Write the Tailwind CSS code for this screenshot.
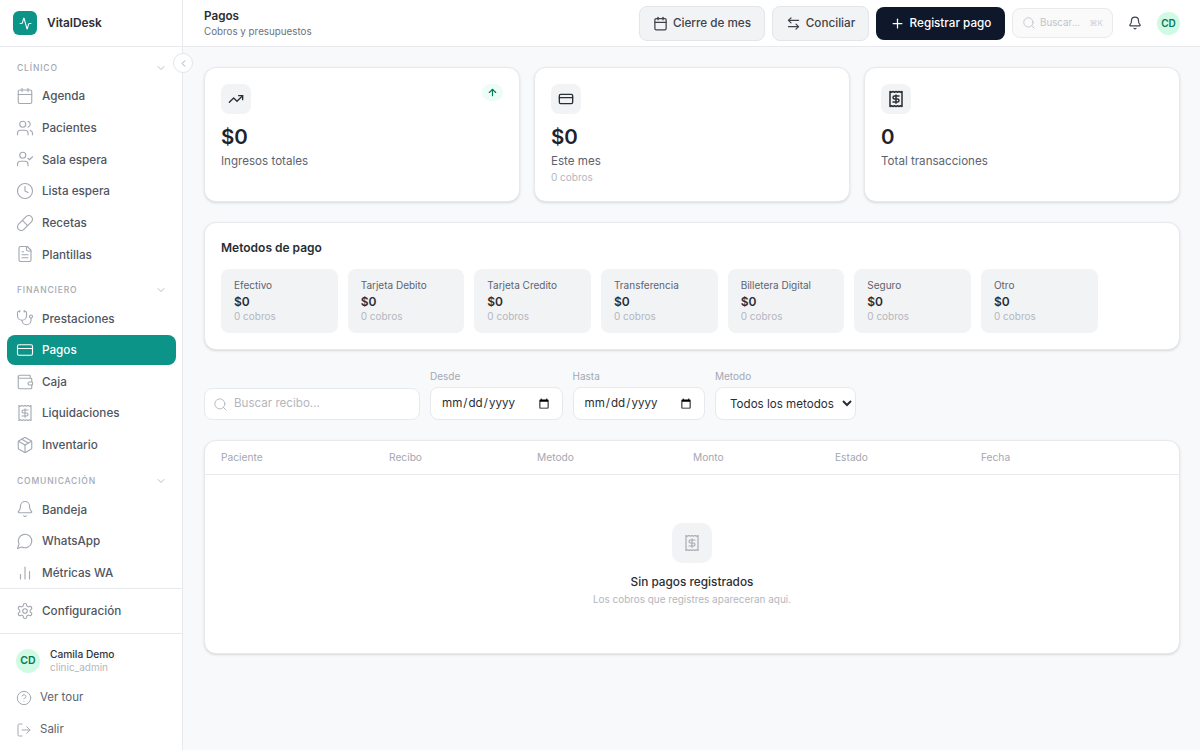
<!DOCTYPE html>
<html lang="es">
<head>
  <meta charset="UTF-8">
  <title>VitalDesk - Pagos</title>
  <script src="https://cdn.jsdelivr.net/npm/@tailwindcss/browser@4"></script>
</head>
<body class="h-screen overflow-hidden bg-[#f8f9fb] text-[#1f2329] [font-family:Inter,sans-serif]">
<div class="flex h-screen">

  <!-- Sidebar -->
  <aside class="relative flex h-full w-[183px] shrink-0 flex-col border-r border-[#e7e9ed] bg-white">
    <div class="flex h-[47px] shrink-0 items-center gap-[10px] border-b border-[#e7e9ed] pl-[13px]">
      <div class="flex h-6 w-6 items-center justify-center rounded-md bg-[#0d9488]">
        <svg class="h-[13px] w-[13px] text-white" viewBox="0 0 24 24" fill="none" stroke="currentColor" stroke-width="2" stroke-linecap="round" stroke-linejoin="round"><path d="M22 12h-2.48a2 2 0 0 0-1.93 1.46l-2.35 8.36a.25.25 0 0 1-.48 0L9.24 2.18a.25.25 0 0 0-.48 0l-2.35 8.36A2 2 0 0 1 4.49 12H2"/></svg>
      </div>
      <span class="text-[11.9px] font-semibold text-[#2a2e35]">VitalDesk</span>
    </div>

    <!-- Boton colapsar -->
    <button class="absolute left-[173px] top-[53px] z-10 flex h-5 w-5 items-center justify-center rounded-full border border-[#e3e5e9] bg-white text-[#9ca3af]">
      <svg class="h-[11px] w-[11px]" viewBox="0 0 24 24" fill="none" stroke="currentColor" stroke-width="2" stroke-linecap="round" stroke-linejoin="round"><path d="m15 18-6-6 6-6"/></svg>
    </button>

    <nav class="flex-1 overflow-hidden pl-[7px] pr-[6px] pt-[13px]">
      <div class="mb-[5px] flex h-4 items-center justify-between pl-[10px] pr-[9px] text-[8.5px] font-medium tracking-[0.1em] text-[#a3a8b1]">
        <span>CLÍNICO</span>
        <svg class="h-3 w-3" viewBox="0 0 24 24" fill="none" stroke="currentColor" stroke-width="1.5" stroke-linecap="round" stroke-linejoin="round"><path d="m6 9 6 6 6-6"/></svg>
      </div>
      <div class="flex flex-col gap-[1.67px]">
        <a class="flex h-[30px] items-center gap-[8px] rounded-lg pl-[9px] text-[11.7px] font-medium text-[#4f5561]">
          <svg class="h-[18px] w-[18px] shrink-0 text-[#a3a8b1]" viewBox="0 0 24 24" fill="none" stroke="currentColor" stroke-width="1.5" stroke-linecap="round" stroke-linejoin="round"><path d="M8 2v4"/><path d="M16 2v4"/><rect width="18" height="18" x="3" y="4" rx="2"/><path d="M3 10h18"/></svg>
          <span class="pt-[2px]">Agenda</span>
        </a>
        <a class="flex h-[30px] items-center gap-[8px] rounded-lg pl-[9px] text-[11.7px] font-medium text-[#4f5561]">
          <svg class="h-[18px] w-[18px] shrink-0 text-[#a3a8b1]" viewBox="0 0 24 24" fill="none" stroke="currentColor" stroke-width="1.5" stroke-linecap="round" stroke-linejoin="round"><path d="M16 21v-2a4 4 0 0 0-4-4H6a4 4 0 0 0-4 4v2"/><circle cx="9" cy="7" r="4"/><path d="M22 21v-2a4 4 0 0 0-3-3.87"/><path d="M16 3.13a4 4 0 0 1 0 7.75"/></svg>
          <span class="pt-[2px]">Pacientes</span>
        </a>
        <a class="flex h-[30px] items-center gap-[8px] rounded-lg pl-[9px] text-[11.7px] font-medium text-[#4f5561]">
          <svg class="h-[18px] w-[18px] shrink-0 text-[#a3a8b1]" viewBox="0 0 24 24" fill="none" stroke="currentColor" stroke-width="1.5" stroke-linecap="round" stroke-linejoin="round"><path d="M16 21v-2a4 4 0 0 0-4-4H6a4 4 0 0 0-4 4v2"/><circle cx="9" cy="7" r="4"/><polyline points="16 11 18 13 22 9"/></svg>
          <span class="pt-[2px]">Sala espera</span>
        </a>
        <a class="flex h-[30px] items-center gap-[8px] rounded-lg pl-[9px] text-[11.7px] font-medium text-[#4f5561]">
          <svg class="h-[18px] w-[18px] shrink-0 text-[#a3a8b1]" viewBox="0 0 24 24" fill="none" stroke="currentColor" stroke-width="1.5" stroke-linecap="round" stroke-linejoin="round"><circle cx="12" cy="12" r="10"/><polyline points="12 6 12 12 16 14"/></svg>
          <span class="pt-[2px]">Lista espera</span>
        </a>
        <a class="flex h-[30px] items-center gap-[8px] rounded-lg pl-[9px] text-[11.7px] font-medium text-[#4f5561]">
          <svg class="h-[18px] w-[18px] shrink-0 text-[#a3a8b1]" viewBox="0 0 24 24" fill="none" stroke="currentColor" stroke-width="1.5" stroke-linecap="round" stroke-linejoin="round"><path d="m10.5 20.5 10-10a4.95 4.95 0 1 0-7-7l-10 10a4.95 4.95 0 1 0 7 7Z"/><path d="m8.5 8.5 7 7"/></svg>
          <span class="pt-[2px]">Recetas</span>
        </a>
        <a class="flex h-[30px] items-center gap-[8px] rounded-lg pl-[9px] text-[11.7px] font-medium text-[#4f5561]">
          <svg class="h-[18px] w-[18px] shrink-0 text-[#a3a8b1]" viewBox="0 0 24 24" fill="none" stroke="currentColor" stroke-width="1.5" stroke-linecap="round" stroke-linejoin="round"><path d="M15 2H6a2 2 0 0 0-2 2v16a2 2 0 0 0 2 2h12a2 2 0 0 0 2-2V7Z"/><path d="M14 2v4a2 2 0 0 0 2 2h4"/><path d="M10 9H8"/><path d="M16 13H8"/><path d="M16 17H8"/></svg>
          <span class="pt-[2px]">Plantillas</span>
        </a>
      </div>

      <div class="mb-[5px] mt-[13px] flex h-4 items-center justify-between pl-[10px] pr-[9px] text-[8.5px] font-medium tracking-[0.1em] text-[#a3a8b1]">
        <span>FINANCIERO</span>
        <svg class="h-3 w-3" viewBox="0 0 24 24" fill="none" stroke="currentColor" stroke-width="1.5" stroke-linecap="round" stroke-linejoin="round"><path d="m6 9 6 6 6-6"/></svg>
      </div>
      <div class="flex flex-col gap-[1.67px]">
        <a class="flex h-[30px] items-center gap-[8px] rounded-lg pl-[9px] text-[11.7px] font-medium text-[#4f5561]">
          <svg class="h-[18px] w-[18px] shrink-0 text-[#a3a8b1]" viewBox="0 0 24 24" fill="none" stroke="currentColor" stroke-width="1.5" stroke-linecap="round" stroke-linejoin="round"><path d="M11 2v2"/><path d="M5 2v2"/><path d="M5 3H4a2 2 0 0 0-2 2v4a6 6 0 0 0 12 0V5a2 2 0 0 0-2-2h-1"/><path d="M8 15a6 6 0 0 0 12 0v-3"/><circle cx="20" cy="10" r="2"/></svg>
          <span class="pt-[2px]">Prestaciones</span>
        </a>
        <a class="flex h-[30px] items-center gap-[8px] rounded-lg bg-[#0d9488] pl-[9px] text-[11.7px] font-medium text-white">
          <svg class="h-[18px] w-[18px] shrink-0 text-white" viewBox="0 0 24 24" fill="none" stroke="currentColor" stroke-width="1.5" stroke-linecap="round" stroke-linejoin="round"><rect width="20" height="14" x="2" y="5" rx="2"/><line x1="2" x2="22" y1="10" y2="10"/></svg>
          <span class="pt-[2px]">Pagos</span>
        </a>
        <a class="flex h-[30px] items-center gap-[8px] rounded-lg pl-[9px] text-[11.7px] font-medium text-[#4f5561]">
          <svg class="h-[18px] w-[18px] shrink-0 text-[#a3a8b1]" viewBox="0 0 24 24" fill="none" stroke="currentColor" stroke-width="1.5" stroke-linecap="round" stroke-linejoin="round"><path d="M19 7V4a1 1 0 0 0-1-1H5a2 2 0 0 0 0 4h15a1 1 0 0 1 1 1v4h-3a2 2 0 0 0 0 4h3a1 1 0 0 0 1-1v-2a1 1 0 0 0-1-1"/><path d="M3 5v14a2 2 0 0 0 2 2h15a1 1 0 0 0 1-1v-4"/></svg>
          <span class="pt-[2px]">Caja</span>
        </a>
        <a class="flex h-[30px] items-center gap-[8px] rounded-lg pl-[9px] text-[11.7px] font-medium text-[#4f5561]">
          <svg class="h-[18px] w-[18px] shrink-0 text-[#a3a8b1]" viewBox="0 0 24 24" fill="none" stroke="currentColor" stroke-width="1.5" stroke-linecap="round" stroke-linejoin="round"><path d="M4 2v20l2-1 2 1 2-1 2 1 2-1 2 1 2-1 2 1V2l-2 1-2-1-2 1-2-1-2 1-2-1-2 1Z"/><path d="M16 8h-6a2 2 0 1 0 0 4h4a2 2 0 1 1 0 4H8"/><path d="M12 17.5v-11"/></svg>
          <span class="pt-[2px]">Liquidaciones</span>
        </a>
        <a class="flex h-[30px] items-center gap-[8px] rounded-lg pl-[9px] text-[11.7px] font-medium text-[#4f5561]">
          <svg class="h-[18px] w-[18px] shrink-0 text-[#a3a8b1]" viewBox="0 0 24 24" fill="none" stroke="currentColor" stroke-width="1.5" stroke-linecap="round" stroke-linejoin="round"><path d="M11 21.73a2 2 0 0 0 2 0l7-4A2 2 0 0 0 21 16V8a2 2 0 0 0-1-1.73l-7-4a2 2 0 0 0-2 0l-7 4A2 2 0 0 0 3 8v8a2 2 0 0 0 1 1.73z"/><path d="M12 22V12"/><polyline points="3.29 7 12 12 20.71 7"/><path d="m7.5 4.27 9 5.15"/></svg>
          <span class="pt-[2px]">Inventario</span>
        </a>
      </div>

      <div class="mb-[5px] mt-[13.5px] flex h-4 items-center justify-between pl-[10px] pr-[9px] text-[8.5px] font-medium tracking-[0.1em] text-[#a3a8b1]">
        <span>COMUNICACIÓN</span>
        <svg class="h-3 w-3" viewBox="0 0 24 24" fill="none" stroke="currentColor" stroke-width="1.5" stroke-linecap="round" stroke-linejoin="round"><path d="m6 9 6 6 6-6"/></svg>
      </div>
      <div class="flex flex-col gap-[1.67px]">
        <a class="flex h-[30px] items-center gap-[8px] rounded-lg pl-[9px] text-[11.7px] font-medium text-[#4f5561]">
          <svg class="h-[18px] w-[18px] shrink-0 text-[#a3a8b1]" viewBox="0 0 24 24" fill="none" stroke="currentColor" stroke-width="1.5" stroke-linecap="round" stroke-linejoin="round"><path d="M10.268 21a2 2 0 0 0 3.464 0"/><path d="M3.262 15.326A1 1 0 0 0 4 17h16a1 1 0 0 0 .74-1.673C19.41 13.956 18 12.499 18 8A6 6 0 0 0 6 8c0 4.499-1.411 5.956-2.738 7.326"/></svg>
          <span class="pt-[2px]">Bandeja</span>
        </a>
        <a class="flex h-[30px] items-center gap-[8px] rounded-lg pl-[9px] text-[11.7px] font-medium text-[#4f5561]">
          <svg class="h-[18px] w-[18px] shrink-0 text-[#a3a8b1]" viewBox="0 0 24 24" fill="none" stroke="currentColor" stroke-width="1.5" stroke-linecap="round" stroke-linejoin="round"><path d="M7.9 20A9 9 0 1 0 4 16.1L2 22Z"/></svg>
          <span class="pt-[2px]">WhatsApp</span>
        </a>
        <a class="flex h-[30px] items-center gap-[8px] rounded-lg pl-[9px] text-[11.7px] font-medium text-[#4f5561]">
          <svg class="h-[18px] w-[18px] shrink-0 text-[#a3a8b1]" viewBox="0 0 24 24" fill="none" stroke="currentColor" stroke-width="1.5" stroke-linecap="round" stroke-linejoin="round"><line x1="18" x2="18" y1="20" y2="10"/><line x1="12" x2="12" y1="20" y2="4"/><line x1="6" x2="6" y1="20" y2="14"/></svg>
          <span class="pt-[2px]">Métricas WA</span>
        </a>
      </div>
    </nav>

    <div class="shrink-0 border-t border-[#e7e9ed] py-[7px] pl-[7px] pr-[6px]">
      <a class="flex h-[30px] items-center gap-[8px] rounded-lg pl-[9px] text-[11.7px] font-medium text-[#4f5561]">
        <svg class="h-[18px] w-[18px] shrink-0 text-[#a3a8b1]" viewBox="0 0 24 24" fill="none" stroke="currentColor" stroke-width="1.5" stroke-linecap="round" stroke-linejoin="round"><path d="M12.22 2h-.44a2 2 0 0 0-2 2v.18a2 2 0 0 1-1 1.73l-.43.25a2 2 0 0 1-2 0l-.15-.08a2 2 0 0 0-2.73.73l-.22.38a2 2 0 0 0 .73 2.73l.15.1a2 2 0 0 1 1 1.72v.51a2 2 0 0 1-1 1.74l-.15.09a2 2 0 0 0-.73 2.73l.22.38a2 2 0 0 0 2.73.73l.15-.08a2 2 0 0 1 2 0l.43.25a2 2 0 0 1 1 1.73V20a2 2 0 0 0 2 2h.44a2 2 0 0 0 2-2v-.18a2 2 0 0 1 1-1.73l.43-.25a2 2 0 0 1 2 0l.15.08a2 2 0 0 0 2.73-.73l.22-.39a2 2 0 0 0-.73-2.73l-.15-.08a2 2 0 0 1-1-1.74v-.5a2 2 0 0 1 1-1.74l.15-.09a2 2 0 0 0 .73-2.73l-.22-.38a2 2 0 0 0-2.73-.73l-.15.08a2 2 0 0 1-2 0l-.43-.25a2 2 0 0 1-1-1.73V4a2 2 0 0 0-2-2z"/><circle cx="12" cy="12" r="3"/></svg>
        <span class="pt-[2px]">Configuración</span>
      </a>
    </div>

    <div class="h-[117px] shrink-0 border-t border-[#e7e9ed] px-[7px] pt-[14px]">
      <div class="flex items-center gap-[10px] pl-[9px]">
        <div class="flex h-6 w-6 shrink-0 items-center justify-center rounded-full bg-[#d1fae5] text-[10.5px] font-semibold text-[#047857]">CD</div>
        <div class="flex flex-col">
          <span class="text-[10.2px] font-medium leading-[13px] text-[#2f343b]">Camila Demo</span>
          <span class="text-[10px] leading-[13px] text-[#b3b7be]">clinic_admin</span>
        </div>
      </div>
      <a class="mt-[9px] flex h-[30px] items-center gap-[8px] pl-[9px] text-[11.5px] text-[#5d636e]">
        <svg class="h-4 w-4 shrink-0 text-[#a3a8b1]" viewBox="0 0 24 24" fill="none" stroke="currentColor" stroke-width="1.5" stroke-linecap="round" stroke-linejoin="round"><circle cx="12" cy="12" r="10"/><path d="M9.09 9a3 3 0 0 1 5.83 1c0 2-3 3-3 3"/><path d="M12 17h.01"/></svg>
        Ver tour
      </a>
      <a class="mt-[1.67px] flex h-[30px] items-center gap-[8px] pl-[9px] text-[11.5px] text-[#5d636e]">
        <svg class="h-4 w-4 shrink-0 text-[#a3a8b1]" viewBox="0 0 24 24" fill="none" stroke="currentColor" stroke-width="1.5" stroke-linecap="round" stroke-linejoin="round"><path d="M9 21H5a2 2 0 0 1-2-2V5a2 2 0 0 1 2-2h4"/><polyline points="16 17 21 12 16 7"/><line x1="21" x2="9" y1="12" y2="12"/></svg>
        Salir
      </a>
    </div>
  </aside>

  <!-- Contenido -->
  <div class="flex min-w-0 flex-1 flex-col">
    <header class="flex h-[47px] shrink-0 items-center border-b border-[#e7e9ed] bg-white pl-[21px] pr-5">
      <div class="flex-1">
        <h1 class="text-[11.7px] font-semibold leading-[17px] text-[#2a2e35]">Pagos</h1>
        <p class="text-[9.8px] leading-[14px] text-[#6b7280]">Cobros y presupuestos</p>
      </div>
      <button class="flex h-[35px] w-[126px] items-center justify-center gap-[5px] rounded-lg border border-[#e3e5e9] bg-[#f2f3f5] text-[11.7px] font-medium text-[#3d434c]">
        <svg class="h-[15px] w-[15px]" viewBox="0 0 24 24" fill="none" stroke="currentColor" stroke-width="2" stroke-linecap="round" stroke-linejoin="round"><path d="M8 2v4"/><path d="M16 2v4"/><rect width="18" height="18" x="3" y="4" rx="2"/><path d="M3 10h18"/></svg>
        <span class="pt-[2px]">Cierre de mes</span>
      </button>
      <button class="ml-[7px] flex h-[35px] w-[97px] items-center justify-center gap-[5px] rounded-lg border border-[#e3e5e9] bg-[#f2f3f5] text-[11.7px] font-medium text-[#3d434c]">
        <svg class="h-[15px] w-[15px]" viewBox="0 0 24 24" fill="none" stroke="currentColor" stroke-width="2" stroke-linecap="round" stroke-linejoin="round"><path d="M8 3 4 7l4 4"/><path d="M4 7h16"/><path d="m16 21 4-4-4-4"/><path d="M20 17H4"/></svg>
        <span class="pt-[2px]">Conciliar</span>
      </button>
      <button class="ml-[7px] flex h-[33px] w-[129px] items-center justify-center gap-[5px] rounded-lg bg-[#0f172a] text-[11.7px] font-medium text-white">
        <svg class="h-[15px] w-[15px]" viewBox="0 0 24 24" fill="none" stroke="currentColor" stroke-width="2" stroke-linecap="round" stroke-linejoin="round"><path d="M5 12h14"/><path d="M12 5v14"/></svg>
        <span class="pt-[2px]">Registrar pago</span>
      </button>
      <div class="ml-[7px] flex h-[30px] w-[101px] items-center rounded-lg border border-[#e8eaed] bg-[#fafafb] pl-[9px] pr-[9px] text-[#bfc3c9]">
        <svg class="h-[14px] w-[14px] shrink-0" viewBox="0 0 24 24" fill="none" stroke="currentColor" stroke-width="1.5" stroke-linecap="round" stroke-linejoin="round"><path d="m21 21-4.34-4.34"/><circle cx="11" cy="11" r="8"/></svg>
        <span class="ml-[4px] flex-1 text-[9.8px]">Buscar...</span>
        <span class="text-[8px] text-[#cdd0d5]">⌘K</span>
      </div>
      <svg class="ml-[15px] h-[14px] w-[14px] text-[#3d434c]" viewBox="0 0 24 24" fill="none" stroke="currentColor" stroke-width="2" stroke-linecap="round" stroke-linejoin="round"><path d="M10.268 21a2 2 0 0 0 3.464 0"/><path d="M3.262 15.326A1 1 0 0 0 4 17h16a1 1 0 0 0 .74-1.673C19.41 13.956 18 12.499 18 8A6 6 0 0 0 6 8c0 4.499-1.411 5.956-2.738 7.326"/></svg>
      <div class="ml-[15px] flex h-[23px] w-[23px] items-center justify-center rounded-full bg-[#d1fae5] text-[10px] font-semibold text-[#047857]">CD</div>
    </header>

    <main class="flex-1 overflow-hidden pl-[21px] pr-5 pt-5">
      <!-- Resumen -->
      <div class="grid h-[135px] grid-cols-3 gap-[14px]">
        <div class="relative rounded-xl border border-[#e7e9ed] bg-white p-[16px] shadow-sm">
          <div class="flex h-[30px] w-[30px] items-center justify-center rounded-lg bg-[#f2f3f5] text-[#2a2e35]">
            <svg class="h-4 w-4" viewBox="0 0 24 24" fill="none" stroke="currentColor" stroke-width="2" stroke-linecap="round" stroke-linejoin="round"><polyline points="22 7 13.5 15.5 8.5 10.5 2 17"/><polyline points="16 7 22 7 22 13"/></svg>
          </div>
          <div class="absolute right-[16px] top-[16px] flex h-[17px] w-[21px] items-center justify-center rounded-full bg-[#ecfdf5] text-[#047857]">
            <svg class="h-[11px] w-[11px]" viewBox="0 0 24 24" fill="none" stroke="currentColor" stroke-width="2.5" stroke-linecap="round" stroke-linejoin="round"><path d="m5 12 7-7 7 7"/><path d="M12 19V5"/></svg>
          </div>
          <p class="mt-[9px] text-[20.5px] font-semibold leading-[28px] text-[#1f2329]">$0</p>
          <p class="mt-[1px] text-[11.6px] leading-[18px] text-[#5d636e]">Ingresos totales</p>
        </div>
        <div class="rounded-xl border border-[#e7e9ed] bg-white p-[16px] shadow-sm">
          <div class="flex h-[30px] w-[30px] items-center justify-center rounded-lg bg-[#f2f3f5] text-[#2a2e35]">
            <svg class="h-4 w-4" viewBox="0 0 24 24" fill="none" stroke="currentColor" stroke-width="2" stroke-linecap="round" stroke-linejoin="round"><rect width="20" height="14" x="2" y="5" rx="2"/><line x1="2" x2="22" y1="10" y2="10"/></svg>
          </div>
          <p class="mt-[9px] text-[20.5px] font-semibold leading-[28px] text-[#1f2329]">$0</p>
          <p class="mt-[1px] text-[11.6px] leading-[18px] text-[#5d636e]">Este mes</p>
          <p class="text-[10px] leading-[14px] text-[#b3b7be]">0 cobros</p>
        </div>
        <div class="rounded-xl border border-[#e7e9ed] bg-white p-[16px] shadow-sm">
          <div class="flex h-[30px] w-[30px] items-center justify-center rounded-lg bg-[#f2f3f5] text-[#2a2e35]">
            <svg class="h-[18px] w-[18px]" viewBox="0 0 24 24" fill="none" stroke="currentColor" stroke-width="2" stroke-linecap="round" stroke-linejoin="round"><path d="M4 2v20l2-1 2 1 2-1 2 1 2-1 2 1 2-1 2 1V2l-2 1-2-1-2 1-2-1-2 1-2-1-2 1Z"/><path d="M16 8h-6a2 2 0 1 0 0 4h4a2 2 0 1 1 0 4H8"/><path d="M12 17.5v-11"/></svg>
          </div>
          <p class="mt-[9px] text-[20.5px] font-semibold leading-[28px] text-[#1f2329]">0</p>
          <p class="mt-[1px] text-[11.6px] leading-[18px] text-[#5d636e]">Total transacciones</p>
        </div>
      </div>

      <!-- Metodos de pago -->
      <section class="mt-5 h-[128px] rounded-xl border border-[#e7e9ed] bg-white px-[16px] pt-[16px] shadow-sm">
        <h2 class="text-[12px] font-semibold leading-[17px] text-[#2a2e35]">Metodos de pago</h2>
        <div class="mt-[13px] flex gap-[10px]">
          <div class="h-[64px] w-[116.67px] rounded-lg bg-[#f2f3f5] px-[13px] pt-[9px]">
            <p class="text-[10px] leading-[14px] text-[#5d636e]">Efectivo</p>
            <p class="text-[12px] font-semibold leading-[19px] text-[#2a2e35]">$0</p>
            <p class="text-[10px] leading-[10px] text-[#b3b7be]">0 cobros</p>
          </div>
          <div class="h-[64px] w-[116.67px] rounded-lg bg-[#f2f3f5] px-[13px] pt-[9px]">
            <p class="text-[10px] leading-[14px] text-[#5d636e]">Tarjeta Debito</p>
            <p class="text-[12px] font-semibold leading-[19px] text-[#2a2e35]">$0</p>
            <p class="text-[10px] leading-[10px] text-[#b3b7be]">0 cobros</p>
          </div>
          <div class="h-[64px] w-[116.67px] rounded-lg bg-[#f2f3f5] px-[13px] pt-[9px]">
            <p class="text-[10px] leading-[14px] text-[#5d636e]">Tarjeta Credito</p>
            <p class="text-[12px] font-semibold leading-[19px] text-[#2a2e35]">$0</p>
            <p class="text-[10px] leading-[10px] text-[#b3b7be]">0 cobros</p>
          </div>
          <div class="h-[64px] w-[116.67px] rounded-lg bg-[#f2f3f5] px-[13px] pt-[9px]">
            <p class="text-[10px] leading-[14px] text-[#5d636e]">Transferencia</p>
            <p class="text-[12px] font-semibold leading-[19px] text-[#2a2e35]">$0</p>
            <p class="text-[10px] leading-[10px] text-[#b3b7be]">0 cobros</p>
          </div>
          <div class="h-[64px] w-[116.67px] rounded-lg bg-[#f2f3f5] px-[13px] pt-[9px]">
            <p class="text-[10px] leading-[14px] text-[#5d636e]">Billetera Digital</p>
            <p class="text-[12px] font-semibold leading-[19px] text-[#2a2e35]">$0</p>
            <p class="text-[10px] leading-[10px] text-[#b3b7be]">0 cobros</p>
          </div>
          <div class="h-[64px] w-[116.67px] rounded-lg bg-[#f2f3f5] px-[13px] pt-[9px]">
            <p class="text-[10px] leading-[14px] text-[#5d636e]">Seguro</p>
            <p class="text-[12px] font-semibold leading-[19px] text-[#2a2e35]">$0</p>
            <p class="text-[10px] leading-[10px] text-[#b3b7be]">0 cobros</p>
          </div>
          <div class="h-[64px] w-[116.67px] rounded-lg bg-[#f2f3f5] px-[13px] pt-[9px]">
            <p class="text-[10px] leading-[14px] text-[#5d636e]">Otro</p>
            <p class="text-[12px] font-semibold leading-[19px] text-[#2a2e35]">$0</p>
            <p class="text-[10px] leading-[10px] text-[#b3b7be]">0 cobros</p>
          </div>
        </div>
      </section>

      <!-- Filtros -->
      <div class="mt-5 flex h-[50px] items-end gap-[10px]">
        <div class="flex h-[32px] w-[216px] items-center rounded-lg border border-[#e7e9ed] bg-white pl-[8px] text-[#b3b7be]">
          <svg class="h-[15px] w-[15px] shrink-0" viewBox="0 0 24 24" fill="none" stroke="currentColor" stroke-width="1.5" stroke-linecap="round" stroke-linejoin="round"><path d="m21 21-4.34-4.34"/><circle cx="11" cy="11" r="8"/></svg>
          <input type="text" placeholder="Buscar recibo..." class="ml-[6px] w-full bg-transparent text-[11.6px] outline-none placeholder:text-[#b3b7be]">
        </div>
        <label class="block w-[132.5px]">
          <span class="block text-[10px] leading-[14px] text-[#a3a8b1]">Desde</span>
          <input type="date" class="mt-[4px] h-[33px] w-full rounded-lg border border-[#e7e9ed] bg-white px-[10px] text-[11.6px] text-[#2a2e35]">
        </label>
        <label class="block w-[132.5px]">
          <span class="block text-[10px] leading-[14px] text-[#a3a8b1]">Hasta</span>
          <input type="date" class="mt-[4px] h-[33px] w-full rounded-lg border border-[#e7e9ed] bg-white px-[10px] text-[11.6px] text-[#2a2e35]">
        </label>
        <label class="block w-[141px]">
          <span class="block text-[10px] leading-[14px] text-[#a3a8b1]">Metodo</span>
          <select class="mt-[4px] h-[33px] w-full rounded-lg border border-[#e7e9ed] bg-white pl-[10px] pr-[2px] text-[11.6px] text-[#2a2e35]">
            <option>Todos los metodos</option>
          </select>
        </label>
      </div>

      <!-- Tabla -->
      <section class="mt-5 h-[214px] rounded-xl border border-[#e7e9ed] bg-white shadow-sm">
        <div class="grid h-[34px] grid-cols-[168px_148px_156px_142px_146px_1fr] items-center border-b border-[#e7e9ed] pl-[16px] text-[10.2px] text-[#a3a8b1]">
          <span>Paciente</span>
          <span>Recibo</span>
          <span>Metodo</span>
          <span>Monto</span>
          <span>Estado</span>
          <span>Fecha</span>
        </div>
        <div class="flex flex-col items-center pt-[48px]">
          <div class="flex h-10 w-10 items-center justify-center rounded-[10px] bg-[#f2f3f5] text-[#a3a8b1]">
            <svg class="h-[18px] w-[18px]" viewBox="0 0 24 24" fill="none" stroke="currentColor" stroke-width="1.5" stroke-linecap="round" stroke-linejoin="round"><path d="M4 2v20l2-1 2 1 2-1 2 1 2-1 2 1 2-1 2 1V2l-2 1-2-1-2 1-2-1-2 1-2-1-2 1Z"/><path d="M16 8h-6a2 2 0 1 0 0 4h4a2 2 0 1 1 0 4H8"/><path d="M12 17.5v-11"/></svg>
          </div>
          <p class="mt-[10px] text-[11.8px] font-medium leading-[18px] text-[#2a2e35]">Sin pagos registrados</p>
          <p class="text-[9.95px] leading-[16px] text-[#b3b7be]">Los cobros que registres apareceran aqui.</p>
        </div>
      </section>
    </main>
  </div>
</div>
</body>
</html>
